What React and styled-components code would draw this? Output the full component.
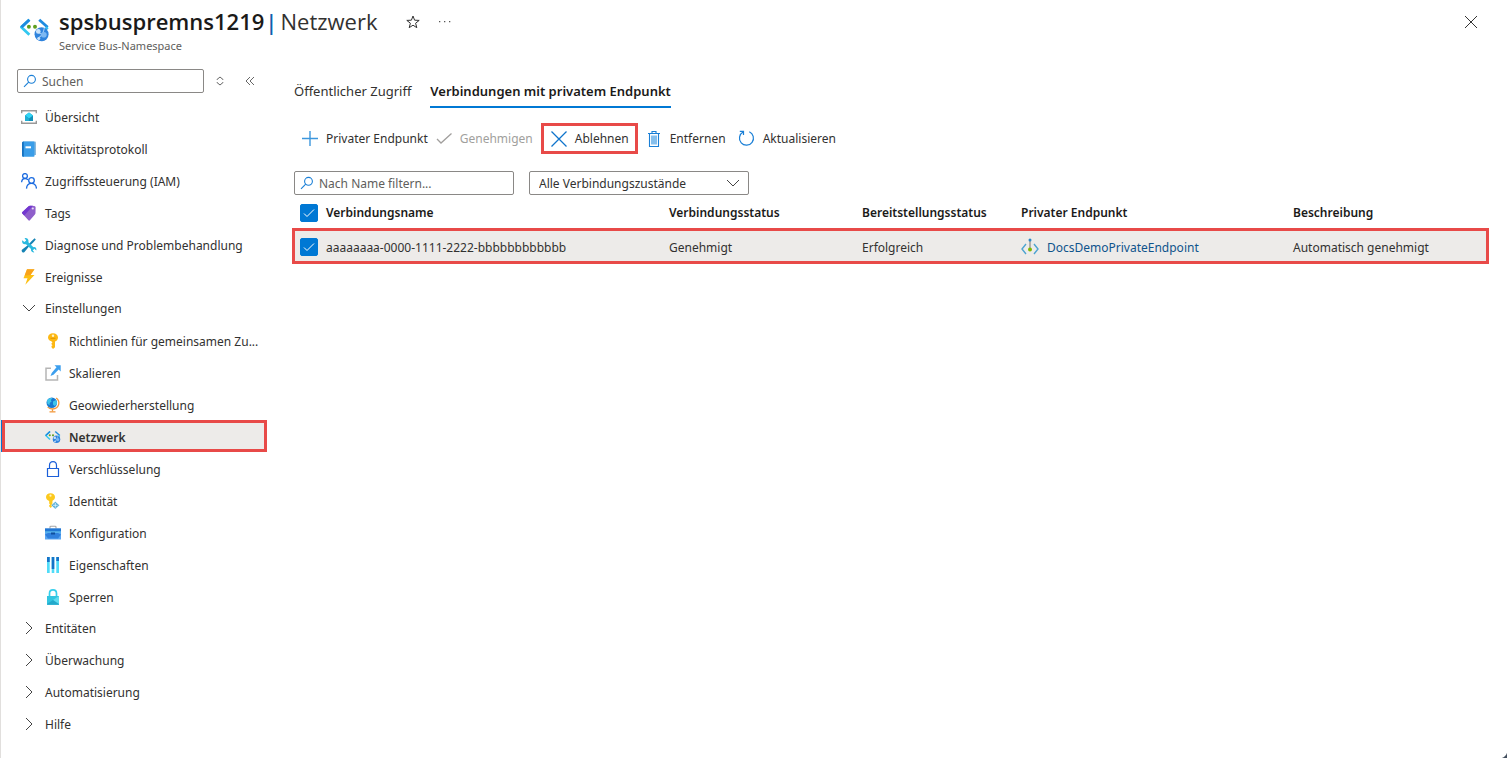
import React, { useState } from 'react';
import styled, { createGlobalStyle, css } from 'styled-components';

const NetworkIcon = ({ size = 16 }) => (
  <svg width={size} height={size} viewBox="0 0 32 32" aria-hidden="true">
    <path d="M10 5 1.500 13l8.500 8" fill="none" stroke="#32c8f0" strokeWidth="3" />
    <path d="M10 5 1.500 13" fill="none" stroke="#1e8be0" strokeWidth="3" />
    <path d="M20.500 5 29.500 13" fill="none" stroke="#1e8be0" strokeWidth="3" />
    <path d="m29.500 13-3 3" fill="none" stroke="#32bef0" strokeWidth="3" />
    <circle cx="9.500" cy="12.500" r="2.100" fill="#5e9e1f" />
    <circle cx="16" cy="12.500" r="2.100" fill="#5e9e1f" />
    <circle cx="23" cy="20.500" r="7.500" fill="#2f83dd" />
    <path d="M18 18 25 21M19 25l5-4 2-7" fill="none" stroke="#9cc9f5" strokeWidth="1.200" />
    <circle cx="19.500" cy="17.500" r="2.500" fill="#c9e2fa" />
    <circle cx="25.500" cy="21" r="3" fill="#7db8f2" />
    <circle cx="20" cy="25" r="1.600" fill="#c9e2fa" />
  </svg>
);

const OverviewIcon = () => (
  <svg width="16" height="16" viewBox="0 0 16 16" aria-hidden="true">
    <path d="M.7 4.200v-2.500h14.600v2.500M.7 11.800v2.500h14.600v-2.500" fill="none" stroke="#999" strokeWidth="1.400" />
    <path d="M4 6.500 8 3.500l4 3v5.500H4z" fill="#1490b8" />
    <path d="M4 6.500 8 3.500l4 3L8 9.500z" fill="#32d4f5" />
    <path d="m4 6.500 4 3V12H4z" fill="#1faed3" />
  </svg>
);

const LogIcon = () => (
  <svg width="16" height="16" viewBox="0 0 16 16" aria-hidden="true">
    <path d="M3 .500h11a1 1 0 0 1 1 1V14H3z" fill="#8ab9dd" />
    <path d="M1 2a1.500 1.500 0 0 1 1.500-1.500H12.500a1 1 0 0 1 1 1V15a.8.800 0 0 1-.8.800H2.500A1.500 1.500 0 0 1 1 14.300z" fill="#3a9de8" />
    <path d="M1 2a1.500 1.500 0 0 1 1.500-1.500h.3v15.300h-.3A1.500 1.500 0 0 1 1 14.300z" fill="#1672c0" />
    <path d="M4.500 5.300h5.500v2H4.500z" fill="#fff" />
  </svg>
);

const PeopleIcon = () => (
  <svg width="16" height="16" viewBox="0 0 16 16" fill="none" stroke="#1b6be0" strokeWidth="1.300" aria-hidden="true">
    <circle cx="4" cy="3" r="2.400" />
    <circle cx="10.500" cy="7.500" r="2.800" />
    <path d="M.6 9.200C.8 7 2 5.500 4 5.500c1.300 0 2.300.500 2.900 1.300M5.500 15.600c.2-3 2-5.200 5-5.200s4.700 2.200 5 5.200" />
  </svg>
);

const TagIcon = () => (
  <svg width="16" height="16" viewBox="0 0 16 16" aria-hidden="true">
    <path d="M1.400 7 7.600 1.200A2 2 0 0 1 9 .700L13.300.900a1.400 1.400 0 0 1 1.300 1.400L14.500 8a2 2 0 0 1-.6 1.400l-5 5.800a1 1 0 0 1-1.500 0L1.300 8.600a1.100 1.100 0 0 1 .1-1.600z" fill="#8f5fcb" />
    <path d="M1.400 7 7.600 1.200A2 2 0 0 1 9 .700l3 .1-8.800 9.800-1.900-2a1.100 1.100 0 0 1 .1-1.600z" fill="#7338d0" />
    <circle cx="11.800" cy="3.500" r="1.100" fill="#e6dcf7" />
  </svg>
);

const ToolsIcon = () => (
  <svg width="16" height="16" viewBox="0 0 16 16" aria-hidden="true">
    <path d="m13.600 1.200 1.200 1.200-2.800 3.400-4 3.600-4.500 5.500a1.600 1.600 0 0 1-2.300-2.300l5.600-4.400 3.600-4z" fill="#1683b4" />
    <path d="M1.200 3.200 3.400 5l1.800-1.600L3.500 1.100c2-.6 4 .5 4 3l-.1 1.100 5 5c2-.5 3.500 1 2.900 3.300l-1.900-1.700-1.700 1.600 1.700 1.900c-2.300.5-3.900-1-3.400-3.200L5 7.200c-2.700.6-4.500-1.500-3.800-4z" fill="#2ab9df" />
  </svg>
);

const BoltIcon = () => (
  <svg width="16" height="16" viewBox="0 0 16 16" aria-hidden="true">
    <path d="M6 .3h7.500L9.500 6H13.500L4.300 15.700 6.500 9.300H2.500z" fill="#fdc013" />
    <path d="M6 .3h7.500L9.500 6l-5.800.500z" fill="#f79a1e" opacity=".8" />
  </svg>
);

const KeyIcon = () => (
  <svg width="16" height="16" viewBox="0 0 16 16" aria-hidden="true">
    <path d="M8 .300c2.900 0 5 1.700 5 4.100 0 1.900-1.200 3.400-3 4v5.800L8 15.900l-1.500-1.600v-1.200l1-.9-1-.9v-1l1-.9-1-.8v-.3C4.500 7.700 3 6.300 3 4.400 3 2 5.100.300 8 .300z" fill="#fdb813" />
    <circle cx="8" cy="2.800" r="1.200" fill="#fff2c4" />
    <path d="M5.500 5.300h5" stroke="#d98d00" strokeWidth=".8" />
  </svg>
);

const ScaleIcon = () => (
  <svg width="16" height="16" viewBox="0 0 16 16" aria-hidden="true">
    <path d="M6 3.200H1v11.800h11.500V10" fill="none" stroke="#b5b5b5" strokeWidth="1.500" />
    <path d="M9.500.300h6.200v6.200l-2-2L8.500 9.700l-3 1.200 1.200-3L11.500 2.300z" fill="#3c9fee" />
  </svg>
);

const GlobeIcon = () => (
  <svg width="16" height="16" viewBox="0 0 16 16" aria-hidden="true">
    <path d="M11.200 1c4.500 3.400 3.200 10.800-3.700 11-2.200 0-3.800-.8-4.800-2.200M7.500 12v2.500" fill="none" stroke="#f2993e" strokeWidth="1.300" />
    <path d="M4.500 14.200h6v1.300h-6z" fill="#f2993e" />
    <circle cx="6.800" cy="5.800" r="5.300" fill="#1779cf" />
    <path d="M2 3.500C3.500 1 6 .500 7.500 1.200L5.800 3l.8 1.500-2 1.400.2 2L2.500 7zM8 4.500l3-1.500c1 1.500 1.200 3 .8 4.500L9.500 9 8 7.500z" fill="#3fc4ea" />
  </svg>
);

const PadlockOutlineIcon = () => (
  <svg width="16" height="16" viewBox="0 0 16 16" fill="none" stroke="#1b5fd9" strokeWidth="1.200" aria-hidden="true">
    <path d="M2.500 7.500h11v8h-11zM4.500 7.500v-3C4.500 2 6 .600 8 .600S11.500 2 11.500 4.500v3" />
  </svg>
);

const IdentityIcon = () => (
  <svg width="16" height="16" viewBox="0 0 16 16" aria-hidden="true">
    <path d="M5.500.300c2.600 0 4.500 1.500 4.500 3.800 0 1.700-1 3-2.500 3.600L7.300 13l-1.500 2-1.600-1.500v-1.200l.9-.9-.9-.9V7.900C2.300 7.300 1 6 1 4.100 1 1.800 2.900.300 5.500.300z" fill="#fcc91e" />
    <circle cx="5.500" cy="2.700" r="1.100" fill="#fff2c4" />
    <path d="m10.300 8.500 4.200 3.800-4.200 3.700-4.200-3.700z" fill="#58aed6" stroke="#fff" strokeWidth=".4" />
    <path d="M10.300 10v4.600M8 12.300h4.600" stroke="#e0f4ff" strokeWidth=".8" />
  </svg>
);

const ToolboxIcon = () => (
  <svg width="16" height="16" viewBox="0 0 16 16" aria-hidden="true">
    <path d="M5 3.500V2a.8.800 0 0 1 .8-.8h4.400A.8.800 0 0 1 11 2v1.500" fill="none" stroke="#a7a7a7" strokeWidth="1.100" />
    <path d="M0 3.300h16v5H0z" fill="#2277d4" />
    <path d="M0 7.500h16v7H0z" fill="#5aa6f2" />
    <path d="M0 9.500 3 8h10l3 1.500-3 4H3z" fill="#2f80dd" />
    <path d="M0 6.500h16v1H0z" fill="#6fd2f5" />
    <path d="M6 7.500h4v2H6z" fill="#0f4f9e" />
  </svg>
);

const PropertiesIcon = () => (
  <svg width="16" height="16" viewBox="0 0 16 16" aria-hidden="true">
    <path d="M2 0h2.700v16H2zM6.700 0h2.600v16H6.700zM11.300 0H14v16h-2.700z" fill="#50dcf8" />
    <path d="M2 0h2.700v5H2zM6.700 0h2.600v12H6.700zM11.300 0H14v4h-2.700z" fill="#1573c8" />
  </svg>
);

const PadlockIcon = () => (
  <svg width="16" height="16" viewBox="0 0 16 16" aria-hidden="true">
    <path d="M4.500 8V4.500C4.500 2.200 6 .9 8 .9s3.500 1.300 3.500 3.600V8" fill="none" stroke="#35cfec" strokeWidth="1.700" />
    <path d="M2 7h12v8a.8.800 0 0 1-.8.800H2.800A.8.800 0 0 1 2 15z" fill="#32c5e0" />
    <path d="M14 7v8.500h-2L8 11z" fill="#5fdcef" />
    <path d="m2 15 6-4 6 4v.8H2z" fill="#23a9cb" />
  </svg>
);

const Chevron = ({ open }) => (
  <svg width="16" height="16" viewBox="0 0 16 16" fill="none" stroke="#444" aria-hidden="true">
    <path d={open ? 'm2 5 6 6 6-6' : 'm5 2 6 6-6 6'} />
  </svg>
);

const SearchIcon = () => (
  <svg width="14" height="14" viewBox="0 0 14 14" fill="none" stroke="#1a7fd6" strokeWidth="1.100" aria-hidden="true">
    <circle cx="8.500" cy="5.300" r="3.900" />
    <path d="M5.700 8.200 1 12.900" />
  </svg>
);

const EndpointIcon = () => (
  <svg width="18" height="18" viewBox="0 0 18 18" fill="none" aria-hidden="true">
    <path d="M5 6 1 11l4 5M13 6l4 5-4 5" stroke="#4ca3d0" strokeWidth="1.400" />
    <path d="M9 2v9" stroke="#888" strokeWidth="1.200" />
    <circle cx="9" cy="2" r="1.500" fill="#2b88c8" />
    <circle cx="9" cy="11.500" r="2" fill="#7fba00" />
  </svg>
);

const PlusIcon = () => (
  <svg width="16" height="16" viewBox="0 0 16 16" aria-hidden="true">
    <path d="M8 0v15M0 7.500h16" stroke="#3c97dd" strokeWidth="1.400" />
  </svg>
);

const CheckIcon = () => (
  <svg width="16" height="16" viewBox="0 0 16 16" aria-hidden="true">
    <path d="m1 8 4 4L15.500 2.500" fill="none" stroke="#a19f9d" strokeWidth="1.300" />
  </svg>
);

const CrossIcon = () => (
  <svg width="16" height="16" viewBox="0 0 16 16" aria-hidden="true">
    <path d="m.5.500 15 15m0-15-15 15" stroke="#0f74cc" strokeWidth="1.300" />
  </svg>
);

const TrashIcon = () => (
  <svg width="16" height="16" viewBox="0 0 16 16" fill="none" aria-hidden="true">
    <path d="M5 4.500h6v9H5z" fill="#86bfec" />
    <path d="M2 2.500h12M6 2.500v-2h4v2M3.500 2.500v13h9v-13" stroke="#1a7fd6" strokeWidth="1.100" />
  </svg>
);

const RefreshIcon = () => (
  <svg width="17" height="17" viewBox="0 0 17 17" fill="none" stroke="#1a7fd6" strokeWidth="1.200" aria-hidden="true">
    <path d="M11.300 1.800a7 7 0 1 1-6.300.3M1.800 1.400H5.500V5" />
  </svg>
);

const settings = [
  { label: 'Richtlinien für gemeinsamen Zu...', icon: <KeyIcon /> },
  { label: 'Skalieren', icon: <ScaleIcon /> },
  { label: 'Geowiederherstellung', icon: <GlobeIcon /> },
  { label: 'Netzwerk', icon: <NetworkIcon />, active: true },
  { label: 'Verschlüsselung', icon: <PadlockOutlineIcon /> },
  { label: 'Identität', icon: <IdentityIcon /> },
  { label: 'Konfiguration', icon: <ToolboxIcon /> },
  { label: 'Eigenschaften', icon: <PropertiesIcon /> },
  { label: 'Sperren', icon: <PadlockIcon /> },
];

const mainItems = [
  { label: 'Übersicht', icon: <OverviewIcon /> },
  { label: 'Aktivitätsprotokoll', icon: <LogIcon /> },
  { label: 'Zugriffssteuerung (IAM)', icon: <PeopleIcon /> },
  { label: 'Tags', icon: <TagIcon /> },
  { label: 'Diagnose und Problembehandlung', icon: <ToolsIcon /> },
  { label: 'Ereignisse', icon: <BoltIcon /> },
];

const groups = ['Entitäten', 'Überwachung', 'Automatisierung', 'Hilfe'];

const Header = () => {
  return (
    <HeaderWrap>
      <NetworkIcon size={30} />
      <Titles>
        <TitleRow>
          <Title>
            <b>spsbuspremns1219</b>
            <i>|</i>
            <span>Netzwerk</span>
          </Title>
          <IconButton aria-label="Favorit">
            <svg width="14" height="14" viewBox="0 0 14 14" fill="none" stroke="#333">
              <path d="m7 1 1.600 4.200 4.600.200-3.600 2.800 1.200 4.500L7 10.200l-3.800 2.500 1.200-4.500L.8 5.400l4.600-.2z" />
            </svg>
          </IconButton>
          <IconButton aria-label="Mehr">
            <svg width="14" height="14" viewBox="0 0 14 14" fill="#555">
              <path d="M1 6h1.300v1.300H1zM6 6h1.300v1.300H6zM11 6h1.300v1.300H11z" />
            </svg>
          </IconButton>
        </TitleRow>
        <Subtitle>Service Bus-Namespace</Subtitle>
      </Titles>
      <IconButton aria-label="Schließen">
        <svg width="14" height="14" viewBox="0 0 14 14" stroke="#333">
          <path d="m1 1 12 12M13 1 1 13" />
        </svg>
      </IconButton>
    </HeaderWrap>
  );
};

const Sidebar = () => {
  const [open, setOpen] = useState(true);

  return (
    <SidebarWrap>
      <SearchRow>
        <SearchField $grow>
          <SearchIcon />
          <input type="text" placeholder="Suchen" aria-label="Suchen" />
        </SearchField>
        <IconButton aria-label="Sortieren">
          <svg width="10" height="10" viewBox="0 0 10 10" fill="none" stroke="#666">
            <path d="M2 4V3.500L5 1l3 2.500V4M2 6v.5L5 9l3-2.500V6" />
          </svg>
        </IconButton>
        <IconButton aria-label="Menü einklappen">
          <svg width="10" height="10" viewBox="0 0 10 10" fill="none" stroke="#666">
            <path d="M5 1 1 5l4 4M9 1 5 5l4 4" />
          </svg>
        </IconButton>
      </SearchRow>
      <nav>
        {mainItems.map(({ label, icon }) => (
          <NavLink key={label} href="#">
            {icon}
            {label}
          </NavLink>
        ))}
        <GroupButton aria-expanded={open} onClick={() => setOpen(!open)}>
          <Chevron open={open} />
          Einstellungen
        </GroupButton>
        {open && settings.map(({ label, icon, active }) => (
          <NavLink key={label} href="#" $nested $active={active}>
            {icon}
            {label}
          </NavLink>
        ))}
        {groups.map((label) => (
          <GroupButton key={label} aria-expanded={false}>
            <Chevron />
            {label}
          </GroupButton>
        ))}
      </nav>
    </SidebarWrap>
  );
};

const Connections = () => {
  return (
    <Main>
      <Tabs role="tablist">
        <Tab role="tab" aria-selected={false}>Öffentlicher Zugriff</Tab>
        <Tab role="tab" aria-selected $active>Verbindungen mit privatem Endpunkt</Tab>
      </Tabs>
      <Toolbar>
        <ToolButton><PlusIcon />Privater Endpunkt</ToolButton>
        <ToolButton disabled><CheckIcon />Genehmigen</ToolButton>
        <ToolButton $marked><CrossIcon />Ablehnen</ToolButton>
        <ToolButton><TrashIcon />Entfernen</ToolButton>
        <ToolButton><RefreshIcon />Aktualisieren</ToolButton>
      </Toolbar>
      <Filters>
        <SearchField>
          <SearchIcon />
          <input type="text" placeholder="Nach Name filtern..." aria-label="Nach Name filtern" />
        </SearchField>
        <SelectField>
          <select aria-label="Verbindungszustand">
            <option>Alle Verbindungszustände</option>
          </select>
          <Chevron open />
        </SelectField>
      </Filters>
      <Table>
        <colgroup>
          <col width="34" />
          <col width="343" />
          <col width="193" />
          <col width="159" />
          <col width="272" />
          <col width="196" />
        </colgroup>
        <thead>
          <tr>
            <th><Checkbox type="checkbox" defaultChecked aria-label="Alle auswählen" /></th>
            <th>Verbindungsname</th>
            <th>Verbindungsstatus</th>
            <th>Bereitstellungsstatus</th>
            <th>Privater Endpunkt</th>
            <th>Beschreibung</th>
          </tr>
        </thead>
        <tbody>
          <tr>
            <td><Checkbox type="checkbox" defaultChecked aria-label="Verbindung auswählen" /></td>
            <td>aaaaaaaa-0000-1111-2222-bbbbbbbbbbbb</td>
            <td>Genehmigt</td>
            <td>Erfolgreich</td>
            <td>
              <EndpointLink href="#">
                <EndpointIcon />
                DocsDemoPrivateEndpoint
              </EndpointLink>
            </td>
            <td>Automatisch genehmigt</td>
          </tr>
        </tbody>
      </Table>
    </Main>
  );
};

const App = () => {
  return (
    <Page>
      <GlobalStyle />
      <Header />
      <Body>
        <Sidebar />
        <Connections />
      </Body>
      <Corner />
    </Page>
  );
};

const GlobalStyle = createGlobalStyle`
    * {
        box-sizing: border-box;
    }

    body {
        margin: 0;
        background-color: #ffffff;
        color: #323130;
        font-family: 'Noto Sans', 'Open Sans', sans-serif;
        font-size: 12px;
        line-height: 21px;
    }

    button, input, select {
        font: inherit;
        color: inherit;
    }

    button {
        padding: 0;
        border: none;
        background: none;
        cursor: pointer;
    }

    svg {
        display: block;
        flex-shrink: 0;
    }
`;

const Page = styled.div`
    position: relative;
    min-height: 100vh;
    border-left: 1px solid #e1dfdd;
    overflow: hidden;
`;

const HeaderWrap = styled.header`
    display: flex;
    align-items: flex-start;
    padding: 7px 29px 0 19px;

    > svg {
        margin-top: 8px;
    }

    > button {
        margin-top: 8px;
    }
`;

const Titles = styled.div`
    flex: 1;
    margin-left: 9px;
`;

const TitleRow = styled.div`
    display: flex;
    align-items: center;
    gap: 18px;

    button {
        padding-top: 2px;
    }
`;

const Title = styled.h1`
    display: flex;
    margin: 0 10px 0 0;
    font-family: 'Open Sans', 'Noto Sans', sans-serif;
    font-size: 22px;
    font-weight: 400;
    line-height: 28px;

    b {
        font-weight: 600;
        color: #1b1a19;
    }

    i {
        margin: 0 3px 0 1px;
        font-style: normal;
        font-weight: 600;
        color: #0f5fae;
    }
`;

const Subtitle = styled.div`
    margin-top: 1px;
    font-size: 11px;
    line-height: 20px;
    color: #605e5c;
`;

const IconButton = styled.button`
    display: flex;
`;

const Body = styled.div`
    display: flex;
    align-items: flex-start;
`;

const SidebarWrap = styled.aside`
    width: 266px;
    flex-shrink: 0;
    padding-top: 13px;
`;

const SearchRow = styled.div`
    display: flex;
    align-items: center;
    gap: 2px;
    margin-bottom: 7px;
    padding: 0 3px 0 16px;

    button {
        width: 28px;
        justify-content: center;
    }
`;

const SearchField = styled.label`
    display: flex;
    align-items: center;
    width: 220px;
    height: 24px;
    padding: 0 5px;
    gap: 5px;
    border: 1px solid #8a8886;
    border-radius: 2px;

    ${({ $grow }) => $grow && css`
        width: auto;
        flex: 1;
        min-width: 0;
    `}

    input {
        flex: 1;
        min-width: 0;
        height: 22px;
        padding: 1px 0 0;
        border: none;
        outline: none;
        background: none;
    }

    input::placeholder {
        color: #605e5c;
        opacity: 1;
    }
`;

const navRow = css`
    display: flex;
    align-items: center;
    gap: 8px;
    width: 100%;
    height: 32px;
    padding-left: 20px;
    color: #323130;
    text-align: left;
    white-space: nowrap;
`;

const NavLink = styled.a`
    ${navRow}
    padding-top: 2px;
    text-decoration: none;

    ${({ $nested }) => $nested && css`
        padding-left: 44px;
    `}

    ${({ $active }) => $active && css`
        padding-left: 43px;
        border-left: 1px solid #0078d4;
        background-color: #edebe9;
        box-shadow: inset 0 0 0 3px #e84a48;
        font-weight: 600;
    `}
`;

const GroupButton = styled.button`
    ${navRow}
`;

const Main = styled.main`
    flex: 1;
    min-width: 0;
    padding: 25px 18px 0 25px;
`;

const Tabs = styled.div`
    display: flex;
    gap: 19px;
    padding-left: 2px;
`;

const Tab = styled.button`
    height: 27px;
    padding-bottom: 7px;
    border-bottom: 2px solid transparent;
    font-size: 13px;
    line-height: 20px;
    white-space: nowrap;

    ${({ $active }) => $active && css`
        border-color: #0078d4;
        color: #1b1a19;
        font-weight: 600;
    `}
`;

const Toolbar = styled.div`
    display: flex;
    align-items: center;
    gap: 8px;
    margin-top: 15px;
    padding-left: 10px;
`;

const ToolButton = styled.button`
    display: flex;
    align-items: center;
    gap: 8px;
    min-width: 84px;
    height: 31px;
    white-space: nowrap;

    &:disabled {
        color: #a19f9d;
        cursor: default;
    }

    ${({ $marked }) => $marked && css`
        padding: 0 6px 0 7px;
        border: 3px solid #e84a48;
    `}
`;

const Filters = styled.div`
    display: flex;
    gap: 15px;
    margin-top: 17px;
    padding-left: 2px;
`;

const SelectField = styled.div`
    display: flex;
    align-items: center;
    width: 220px;
    height: 24px;
    border: 1px solid #8a8886;
    border-radius: 2px;

    select {
        width: 100%;
        height: 22px;
        padding: 1px 9px 0;
        border: none;
        outline: none;
        appearance: none;
        background: none;
    }

    svg {
        margin: 0 7px 0 -23px;
        pointer-events: none;
    }
`;

const Table = styled.table`
    width: 100%;
    border-collapse: collapse;
    table-layout: fixed;

    th, td {
        padding: 2px 0 0;
        text-align: left;
        vertical-align: middle;
        white-space: nowrap;
    }

    th {
        height: 33px;
        color: #1b1a19;
        font-weight: 600;
        line-height: 20px;
    }

    td {
        height: 36px;
    }

    th:first-child, td:first-child {
        padding-left: 8px;
    }

    tbody tr {
        background-color: #edebe9;
        outline: 3px solid #e84a48;
        outline-offset: -3px;
    }
`;

const Checkbox = styled.input`
    display: block;
    width: 18px;
    height: 18px;
    margin: 0;
    appearance: none;
    border: 1px solid #0078d4;
    border-radius: 2px;

    &:checked {
        background: #0078d4 url("data:image/svg+xml,%3Csvg xmlns='http://www.w3.org/2000/svg' viewBox='0 0 16 16' fill='none' stroke='white'%3E%3Cpath d='m3 8.500 3 3L13 4.500'/%3E%3C/svg%3E") center / 16px no-repeat;
    }
`;

const EndpointLink = styled.a`
    display: flex;
    align-items: center;
    gap: 8px;
    color: #0f548c;
    text-decoration: none;
`;

// rounded window edge, the backdrop shows through behind it
const Corner = styled.div`
    position: absolute;
    right: 0;
    bottom: 0;
    width: 8px;
    height: 8px;
    background: radial-gradient(circle at 0 0, transparent 8px, #44505f 9px);
`;

export default App;
